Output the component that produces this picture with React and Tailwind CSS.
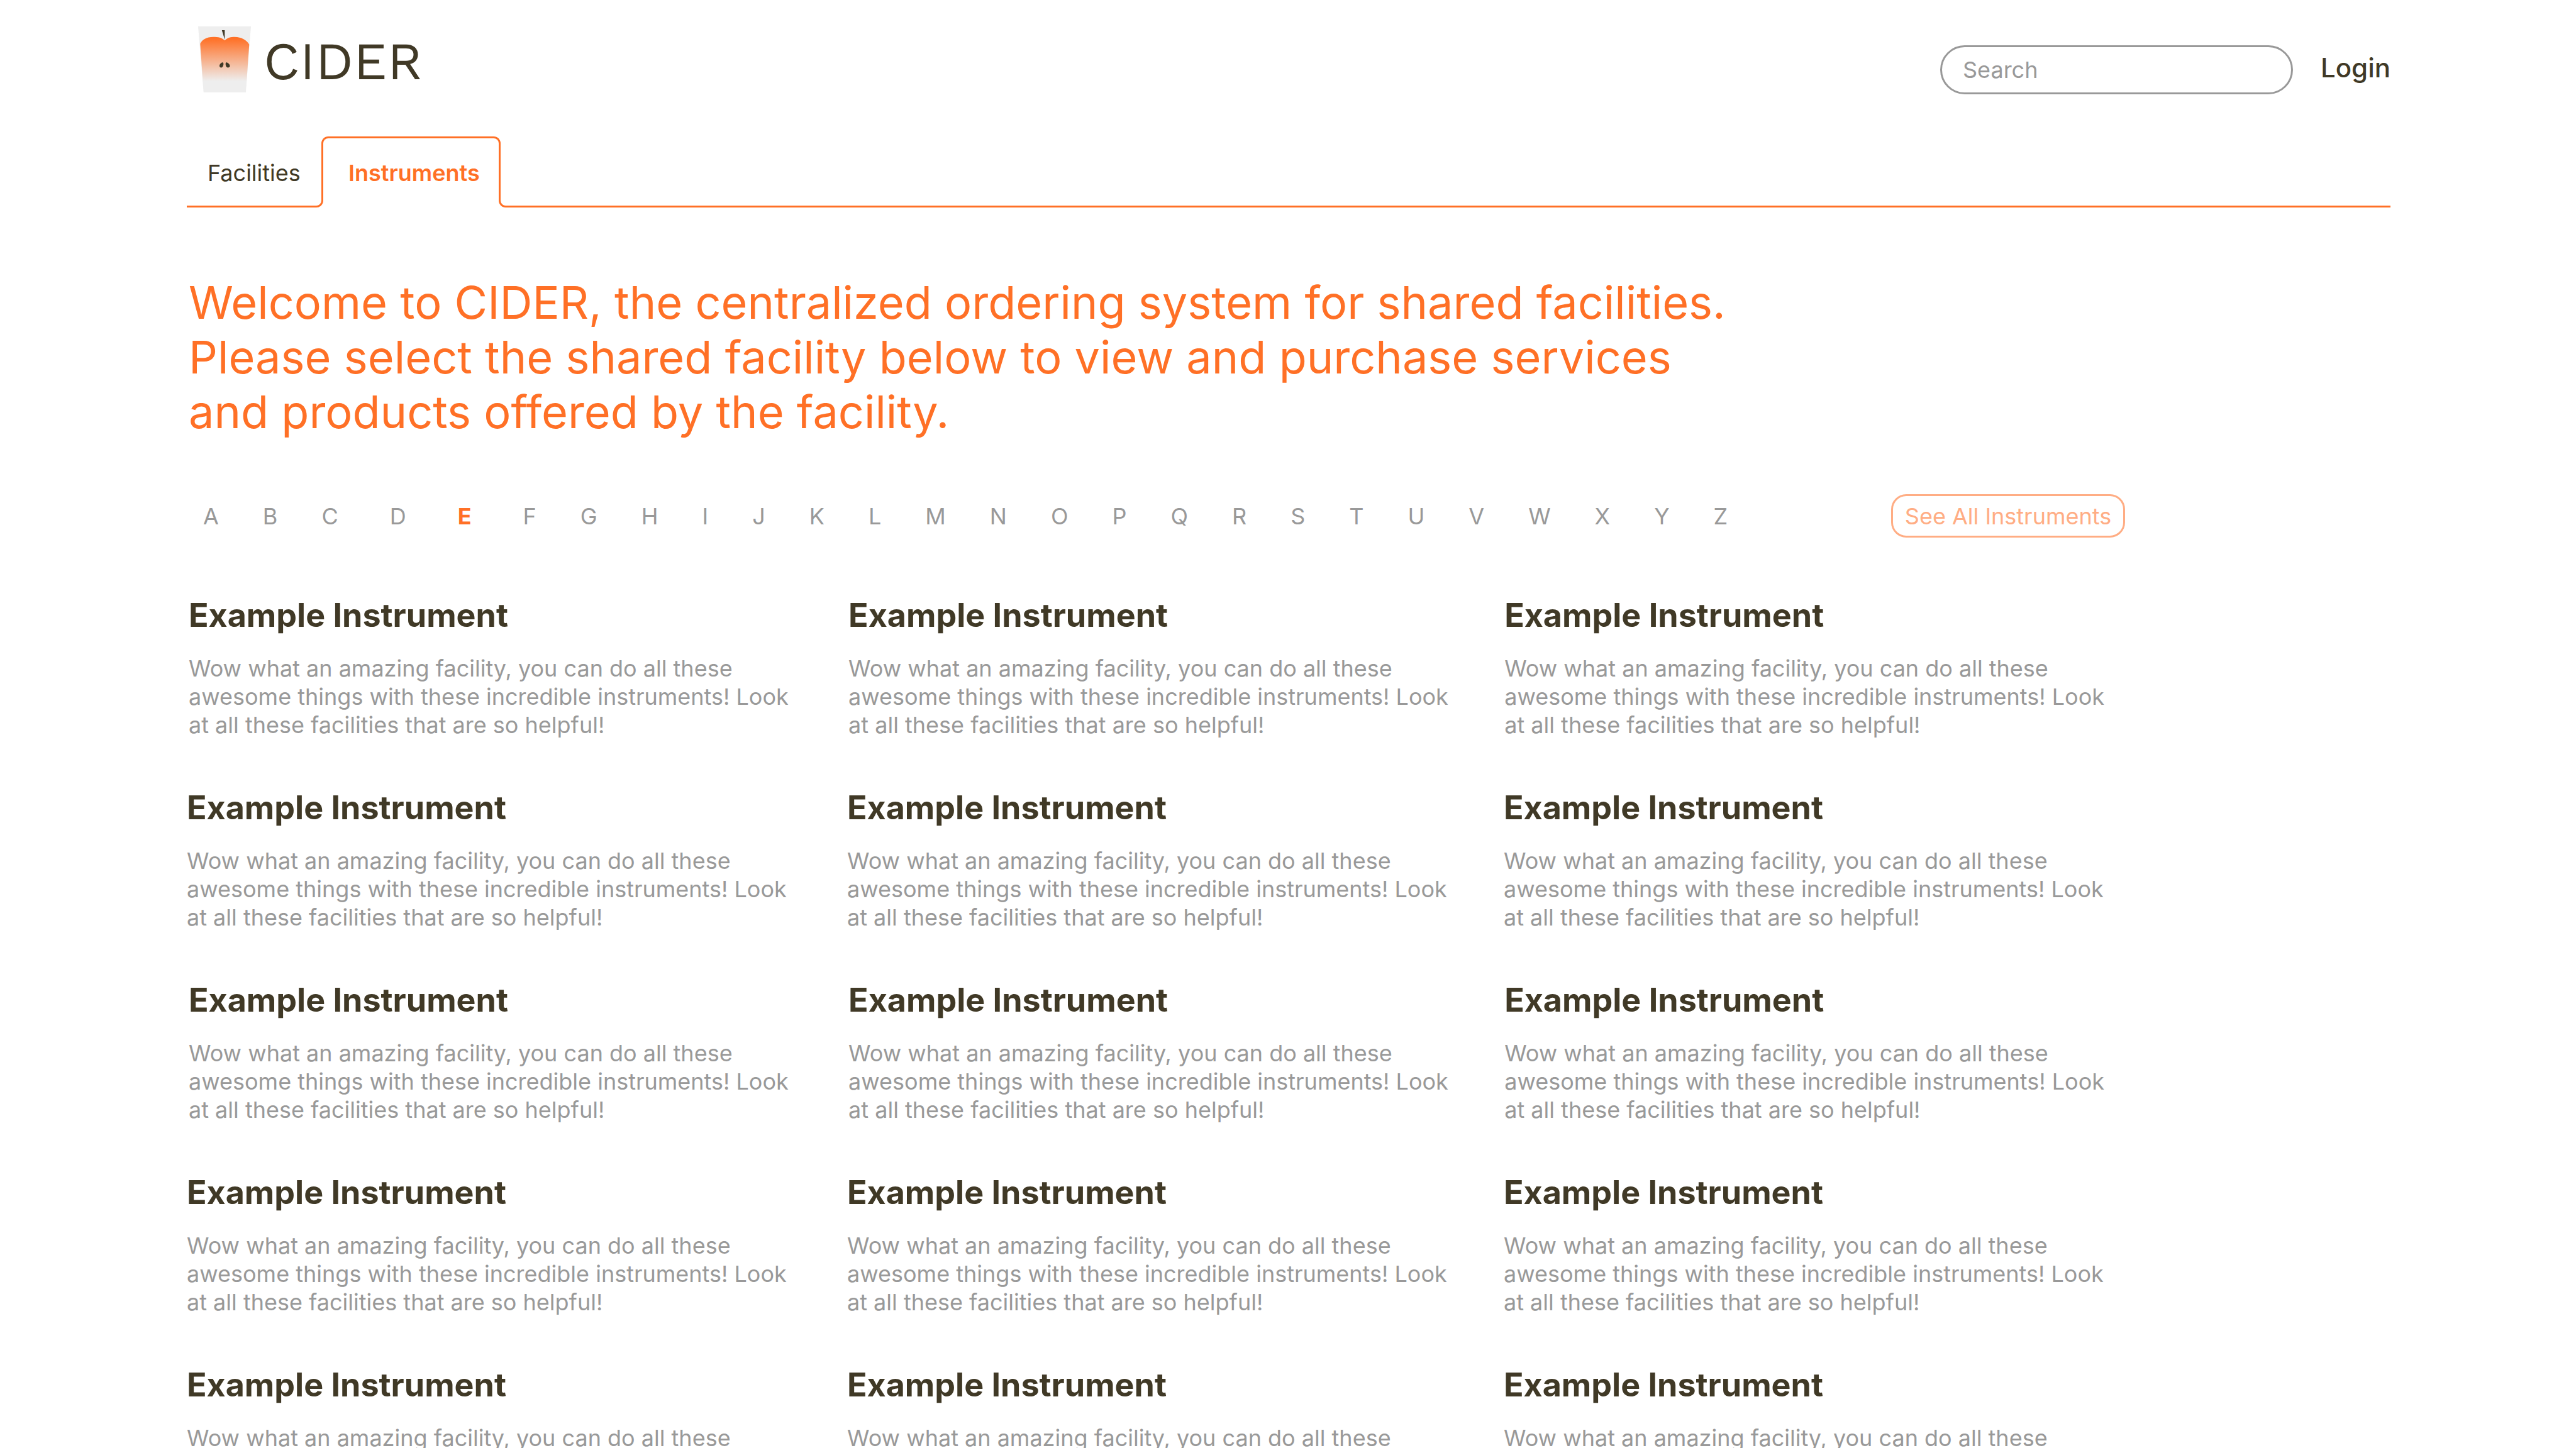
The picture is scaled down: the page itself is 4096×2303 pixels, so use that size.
const LETTERS = 'ABCDEFGHIJKLMNOPQRSTUVWXYZ'.split('');
const ROWS = [0, 1, 2, 3, 4];
const COLUMNS = [0, 1, 2];

function Logo() {
  return (
    <svg viewBox="0 0 140 175" className="h-[105px] w-[84px]" role="img" aria-label="Cider glass">
      <defs>
        <linearGradient id="cider" gradientUnits="userSpaceOnUse" x1="0" y1="32" x2="0" y2="145">
          <stop offset="0" stopColor="#ff7026" />
          <stop offset="1" stopColor="#eeeeee" />
        </linearGradient>
      </defs>
      <path d="M0 0H140L126.500 175H14.500Z" fill="#eeeeee" />
      <path
        d="M5.500 46C11 35 22 28 40 28C54 28 62 29.500 70.500 37C79 29.500 86 28 97 28C115 28 129 37 135.500 48L128.500 145H12.500Z"
        fill="url(#cider)"
      />
      <path d="M63 10H70.500V35Z" fill="#403926" />
      <path
        d="M65.500 95.500C68.500 97 67.500 104 64.500 108C62.500 110 59 109.500 57 106.500C55.500 103 58 99 61.500 96.500C63 95.300 64.500 95 65.500 95.500Z"
        fill="#403926"
      />
      <path
        d="M74.500 95.500C71.500 97 73 105 75.500 108C78 110 81 109.500 83.500 107.500C85.500 105 84 100 78.500 96.500C77 95.300 75.500 95 74.500 95.500Z"
        fill="#403926"
      />
    </svg>
  );
}

function Header() {
  return (
    <header className="flex items-start pl-[18px]">
      <a href="#home" className="flex items-start gap-5">
        <Logo />
        <span className="font-['Work_Sans','Liberation_Sans',sans-serif] text-[84px] leading-[110px]">CIDER</span>
      </a>
      <div className="mt-[30px] ml-auto flex items-start gap-11">
        <input
          type="search"
          aria-label="Search"
          placeholder="Search"
          className="h-[78px] w-[561px] rounded-full border-3 border-[#999999] bg-white pr-8 pl-[33px] text-4xl text-[#999999] placeholder:text-[#999999] placeholder:opacity-100"
        />
        <a href="#login" className="text-[42px] leading-[72px] font-medium">Login</a>
      </div>
    </header>
  );
}

function Tabs() {
  return (
    <nav className="mt-[65px] flex h-[113px] items-stretch text-4xl">
      <div className="mt-3 flex w-[217px] items-center rounded-br-[11px] border-r-3 border-b-3 border-[#ff7026] pb-[6px] pl-[33px]">
        <button type="button">Facilities</button>
      </div>
      <button
        type="button"
        aria-current="page"
        className="mb-3 -ml-[3px] w-[285px] rounded-t-[11px] border-x-3 border-t-3 border-[#ff7026] pt-3 pl-10 text-left font-semibold text-[#ff7026]"
      >
        Instruments
      </button>
      <div className="mt-3 -ml-[3px] flex-1 rounded-bl-[11px] border-b-3 border-l-3 border-[#ff7026]" />
    </nav>
  );
}

function AlphabetFilter() {
  return (
    <div className="mt-[88px] flex max-w-[3082px] items-center justify-between pl-[26px] text-4xl text-[#999999]">
      <div className="flex gap-[70px]">
        {LETTERS.map((letter) =>
          letter === 'E' ? (
            <button key={letter} type="button" aria-pressed="true" className="mx-3 font-bold text-[#ff7026]">
              {letter}
            </button>
          ) : (
            <button key={letter} type="button" className={letter === 'D' ? 'ml-3' : ''}>
              {letter}
            </button>
          ),
        )}
      </div>
      <button type="button" className="h-[69px] w-[372px] rounded-3xl border-3 border-[#ffad84] text-[#ffad84]">
        See All Instruments
      </button>
    </div>
  );
}

function InstrumentCard() {
  return (
    <article>
      <h2 className="text-[52px] leading-[66px] font-bold">Example Instrument</h2>
      <p className="mt-[29px] max-w-[960px] text-4xl leading-[45px] text-[#999999]">
        Wow what an amazing facility, you can do all these awesome things with these incredible instruments! Look at
        all these facilities that are so helpful!
      </p>
    </article>
  );
}

export default function App() {
  return (
    <div className="h-screen overflow-hidden bg-white pt-[42px] pr-[295px] pl-[297px] font-['Inter',sans-serif] text-[#403926]">
      <Header />
      <Tabs />
      <main>
        <h1 className="mt-[107px] max-w-[2460px] pl-[3px] text-7xl leading-[87px] text-[#ff7026]">
          Welcome to CIDER, the centralized ordering system for shared facilities. Please select the shared facility
          below to view and purchase services and products offered by the facility.
        </h1>
        <AlphabetFilter />
        <div className="mt-[91px] flex flex-col gap-[76px]">
          {ROWS.map((row) => (
            <section
              key={row}
              className={
                row === 0 || row === 2
                  ? 'grid grid-cols-[1050fr_1044fr_1410fr] pl-[3px]'
                  : 'grid grid-cols-[1050fr_1044fr_1410fr]'
              }
            >
              {COLUMNS.map((column) => (
                <InstrumentCard key={column} />
              ))}
            </section>
          ))}
        </div>
      </main>
    </div>
  );
}
